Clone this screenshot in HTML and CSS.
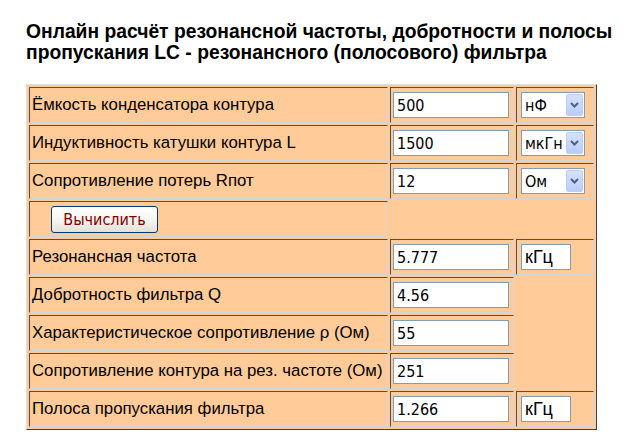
FILE: index.html
```html
<!DOCTYPE html>
<html lang="ru">
<head>
  <meta charset="UTF-8">
  <title>Расчёт LC фильтра</title>
  <link rel="stylesheet" href="styles.css">
</head>
<body>
  <h1 class="title">Онлайн расчёт резонансной частоты, добротности и полосы<br>пропускания LC - резонансного (полосового) фильтра</h1>

  <table class="calc">
    <tr>
      <td class="name">Ёмкость конденсатора контура</td>
      <td class="val"><input class="num" type="text" value="500"></td>
      <td class="unit">
        <span class="sel">
          <select><option>нФ</option><option>мкФ</option><option>пФ</option></select>
          <span class="arrow"><svg width="9" height="6" viewBox="0 0 9 6"><path d="M1 1 L4.5 4.5 L8 1" fill="none" stroke="#4d6185" stroke-width="2"/></svg></span>
        </span>
      </td>
    </tr>
    <tr>
      <td class="name">Индуктивность катушки контура L</td>
      <td class="val"><input class="num" type="text" value="1500"></td>
      <td class="unit">
        <span class="sel">
          <select><option>мкГн</option><option>мГн</option><option>Гн</option></select>
          <span class="arrow"><svg width="9" height="6" viewBox="0 0 9 6"><path d="M1 1 L4.5 4.5 L8 1" fill="none" stroke="#4d6185" stroke-width="2"/></svg></span>
        </span>
      </td>
    </tr>
    <tr>
      <td class="name">Сопротивление потерь Rпот</td>
      <td class="val"><input class="num" type="text" value="12"></td>
      <td class="unit">
        <span class="sel">
          <select><option>Ом</option><option>кОм</option></select>
          <span class="arrow"><svg width="9" height="6" viewBox="0 0 9 6"><path d="M1 1 L4.5 4.5 L8 1" fill="none" stroke="#4d6185" stroke-width="2"/></svg></span>
        </span>
      </td>
    </tr>
    <tr>
      <td class="name"><button type="button" class="go">Вычислить</button></td>
    </tr>
    <tr>
      <td class="name">Резонансная частота</td>
      <td class="val"><input class="num" type="text" value="5.777"></td>
      <td class="unit"><input class="dim" type="text" value="кГц"></td>
    </tr>
    <tr>
      <td class="name">Добротность фильтра Q</td>
      <td class="val"><input class="num" type="text" value="4.56"></td>
    </tr>
    <tr>
      <td class="name">Характеристическое сопротивление ρ (Ом)</td>
      <td class="val"><input class="num" type="text" value="55"></td>
    </tr>
    <tr>
      <td class="name">Сопротивление контура на рез. частоте (Ом)</td>
      <td class="val"><input class="num" type="text" value="251"></td>
    </tr>
    <tr>
      <td class="name">Полоса пропускания фильтра</td>
      <td class="val"><input class="num" type="text" value="1.266"></td>
      <td class="unit"><input class="dim" type="text" value="кГц"></td>
    </tr>
  </table>
</body>
</html>
```

FILE: styles.css
```css
body {
  margin: 0;
  padding: 21px 0 0 26px;
  background: #fff;
  color: #000;
  font-family: "Liberation Sans", Arial, sans-serif;
}

.title {
  margin: 0 0 21px;
  font-size: 19.3px;
  line-height: 21px;
  font-weight: bold;
}

/* old-school border="1" table */
.calc {
  border-collapse: separate;
  border-spacing: 2px;
  border: 1px solid;
  border-color: #e0e0e0 #404040 #404040 #e0e0e0;
  background: #ffcc99;
}
.calc td {
  height: 34px;
  padding: 0 2px;
  border: 1px solid;
  border-color: #505050 #d4d4d4 #d4d4d4 #505050;
  font-size: 16.8px;
  white-space: nowrap;
  vertical-align: middle;
}
.calc td.name {
  width: 353px;
}
.calc td.val {
  width: 118px;
}
.calc td.unit {
  width: 70px;
  padding-left: 4px;
}

.num, .dim, .sel select {
  box-sizing: border-box;
  height: 26px;
  margin: 0;
  border: 1px solid #7f9db9;
  background: #fff;
  color: #000;
  outline: none;
}
.num {
  display: block;
  width: 116px;
  padding: 0 3px;
  font-family: "DejaVu Sans Condensed", "DejaVu Sans", sans-serif;
  font-size: 16px;
}
.dim {
  display: block;
  width: 50px;
  padding: 0 3px;
  font-family: "Liberation Sans", Arial, sans-serif;
  font-size: 18px;
}

/* XP style dropdown */
.sel {
  position: relative;
  display: block;
  width: 64px;
}
.sel select {
  display: block;
  width: 64px;
  padding: 0 0 0 3px;
  appearance: none;
  -webkit-appearance: none;
  font-family: "DejaVu Sans Condensed", "DejaVu Sans", sans-serif;
  font-size: 16px;
}
.arrow {
  position: absolute;
  top: 2px;
  right: 2px;
  width: 17px;
  height: 22px;
  box-sizing: border-box;
  border: 1px solid #bccdf5;
  border-radius: 2px;
  background: linear-gradient(#d6e2fc, #b8cdf8);
  display: flex;
  align-items: center;
  justify-content: center;
  pointer-events: none;
}

.go {
  display: block;
  margin-left: 19px;
  width: 107px;
  height: 27px;
  padding: 0;
  border: 1px solid #003c74;
  border-radius: 3px;
  background: linear-gradient(#ffffff, #f3f2ec 60%, #e3e0d5);
  color: #800000;
  font-family: "DejaVu Sans Condensed", "DejaVu Sans", sans-serif;
  font-size: 16px;
  cursor: pointer;
}
```
